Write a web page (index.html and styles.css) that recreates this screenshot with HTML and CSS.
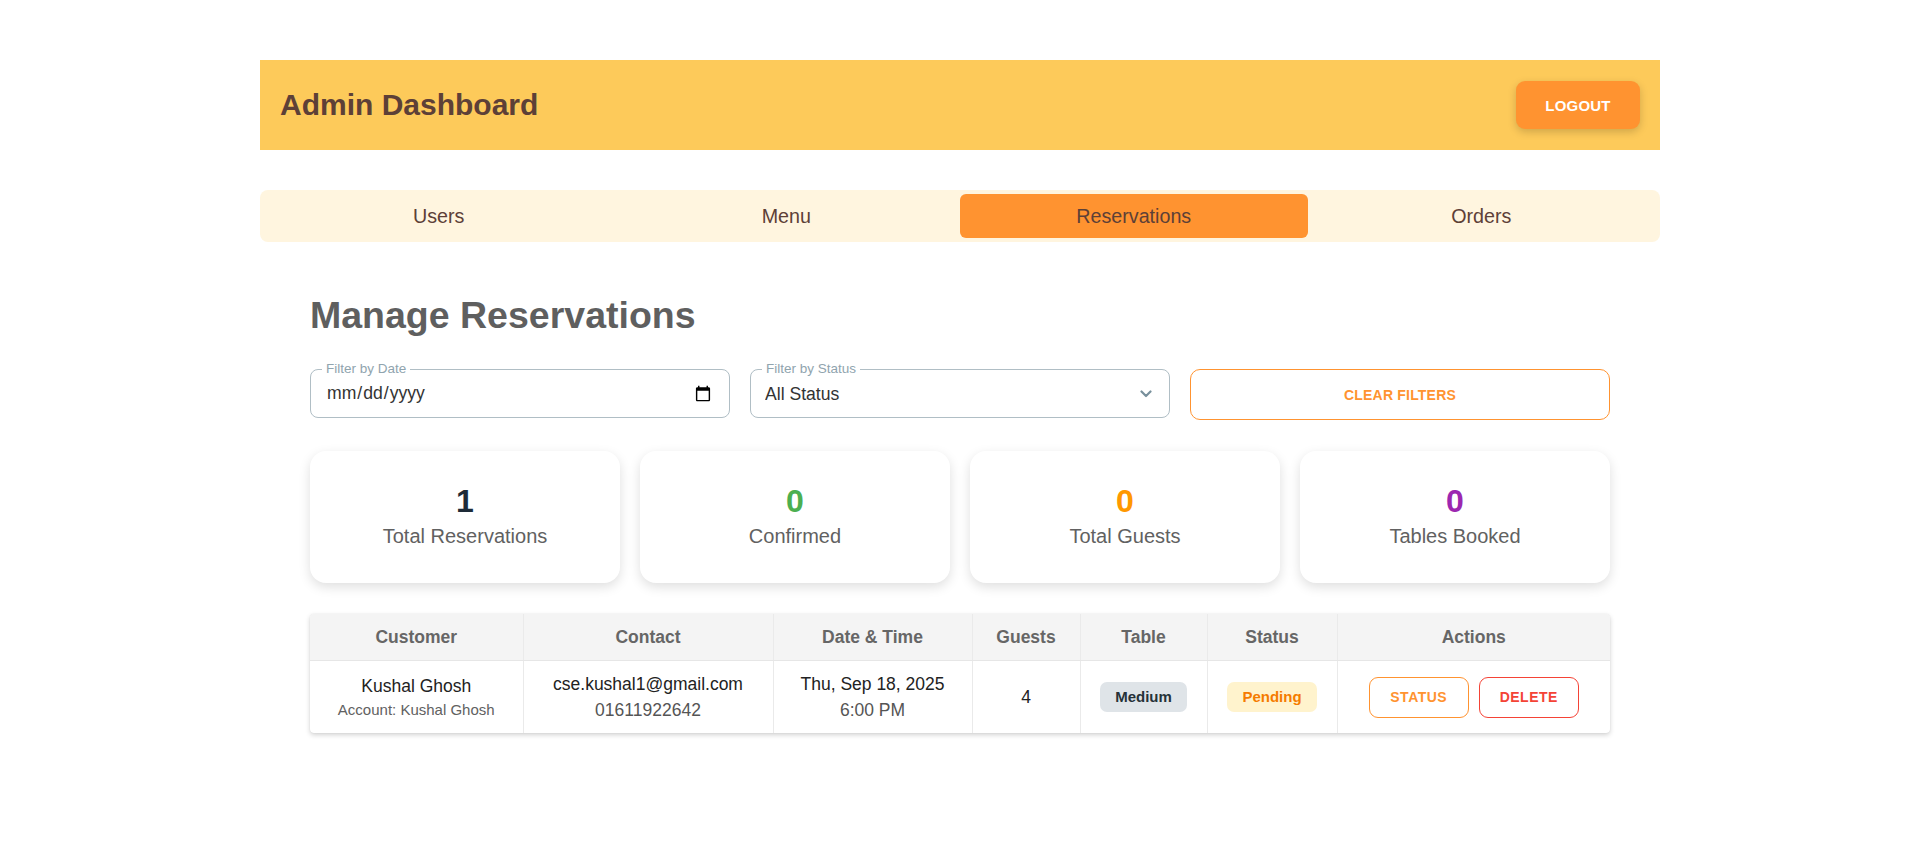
FILE: index.html
```html
<!DOCTYPE html>
<html lang="en">
<head>
<meta charset="utf-8">
<title>Admin Dashboard</title>
<link rel="stylesheet" href="styles.css">
</head>
<body>
<div class="page">
  <div class="container">
    <header class="topbar">
      <h1 class="brand">Admin Dashboard</h1>
      <button class="logout" type="button">LOGOUT</button>
    </header>

    <nav class="tabs">
      <a class="tab">Users</a>
      <a class="tab">Menu</a>
      <a class="tab active">Reservations</a>
      <a class="tab">Orders</a>
    </nav>
  </div>

  <main class="content">
    <h2 class="title">Manage Reservations</h2>

    <div class="filters">
      <label class="field">
        <span class="field-label">Filter by Date</span>
        <input class="date-input" type="date">
      </label>
      <label class="field">
        <span class="field-label">Filter by Status</span>
        <select class="select-input">
          <option>All Status</option>
          <option>Pending</option>
          <option>Confirmed</option>
          <option>Cancelled</option>
        </select>
        <svg class="chevron" width="12" height="8" viewBox="0 0 12 8" aria-hidden="true"><path d="M1.5 1.5 L6 6 L10.5 1.5" fill="none" stroke="#78909c" stroke-width="2.2" stroke-linecap="round" stroke-linejoin="round"/></svg>
      </label>
      <button class="clear-btn" type="button">CLEAR FILTERS</button>
    </div>

    <div class="stats">
      <div class="stat-card">
        <div class="stat-num num-dark">1</div>
        <div class="stat-label">Total Reservations</div>
      </div>
      <div class="stat-card">
        <div class="stat-num num-green">0</div>
        <div class="stat-label">Confirmed</div>
      </div>
      <div class="stat-card">
        <div class="stat-num num-orange">0</div>
        <div class="stat-label">Total Guests</div>
      </div>
      <div class="stat-card">
        <div class="stat-num num-purple">0</div>
        <div class="stat-label">Tables Booked</div>
      </div>
    </div>

    <div class="table-wrap">
      <table class="res-table">
        <colgroup>
          <col class="c-customer">
          <col class="c-contact">
          <col class="c-date">
          <col class="c-guests">
          <col class="c-table">
          <col class="c-status">
          <col class="c-actions">
        </colgroup>
        <thead>
          <tr>
            <th>Customer</th>
            <th>Contact</th>
            <th>Date &amp; Time</th>
            <th>Guests</th>
            <th>Table</th>
            <th>Status</th>
            <th>Actions</th>
          </tr>
        </thead>
        <tbody>
          <tr>
            <td>
              <div class="name">Kushal Ghosh</div>
              <div class="sub">Account: Kushal Ghosh</div>
            </td>
            <td>
              <div class="email">cse.kushal1@gmail.com</div>
              <div class="muted">01611922642</div>
            </td>
            <td>
              <div class="email">Thu, Sep 18, 2025</div>
              <div class="muted">6:00 PM</div>
            </td>
            <td class="guests">4</td>
            <td><span class="chip chip-table">Medium</span></td>
            <td><span class="chip chip-pending">Pending</span></td>
            <td>
              <div class="actions">
                <button class="act act-status" type="button">STATUS</button>
                <button class="act act-delete" type="button">DELETE</button>
              </div>
            </td>
          </tr>
        </tbody>
      </table>
    </div>
  </main>
</div>
</body>
</html>
```

FILE: styles.css
```css
* {
  box-sizing: border-box;
}

body {
  margin: 0;
  background: #ffffff;
  font-family: "Liberation Sans", Arial, Helvetica, sans-serif;
  color: #333333;
}

.page {
  padding-top: 60px;
  padding-bottom: 40px;
}

.container {
  width: 1400px;
  margin: 0 auto;
}

/* Header */
.topbar {
  height: 90px;
  background: #fdca5a;
  display: flex;
  align-items: center;
  justify-content: space-between;
  padding: 0 20px 0 20px;
}

.brand {
  margin: 0;
  font-size: 30px;
  font-weight: 700;
  color: #5d4037;
}

.logout {
  width: 124px;
  height: 48px;
  border: none;
  border-radius: 9px;
  background: #ff9330;
  color: #ffffff;
  font-family: inherit;
  font-size: 15px;
  font-weight: 700;
  letter-spacing: 0.2px;
  box-shadow: 0 3px 8px rgba(0, 0, 0, 0.18);
  cursor: pointer;
}

/* Tabs */
.tabs {
  margin-top: 40px;
  height: 52px;
  background: #fff5df;
  border-radius: 8px;
  padding: 4px 5px;
  display: grid;
  grid-template-columns: repeat(4, 1fr);
}

.tab {
  display: flex;
  align-items: center;
  justify-content: center;
  font-size: 19.7px;
  color: #5d4037;
  border-radius: 6px;
  cursor: pointer;
}

.tab.active {
  background: #ff9330;
}

/* Content */
.content {
  width: 1300px;
  margin: 0 auto;
}

.title {
  margin: 52px 0 0 0;
  font-size: 37.5px;
  font-weight: 700;
  color: #5f5f5f;
  line-height: 42px;
}

.filters {
  margin-top: 33px;
  display: grid;
  grid-template-columns: repeat(3, 1fr);
  gap: 20px;
  align-items: start;
}

.field {
  position: relative;
  display: flex;
  align-items: center;
  height: 49px;
  border: 1px solid #b0bec5;
  border-radius: 8px;
}

.field-label {
  position: absolute;
  top: -9px;
  left: 11px;
  padding: 0 4px;
  background: #ffffff;
  font-size: 13.5px;
  line-height: 16px;
  color: #90a4ae;
}

.date-input,
.select-input {
  width: 100%;
  height: 100%;
  border: none;
  outline: none;
  background: transparent;
  font-family: inherit;
  font-size: 17.6px;
  color: #333333;
}

.date-input {
  padding: 0 15px 0 15px;
}

.select-input {
  appearance: none;
  -webkit-appearance: none;
  padding: 0 40px 0 14px;
}

.chevron {
  position: absolute;
  right: 17px;
  top: 20px;
  pointer-events: none;
}

.clear-btn {
  height: 51px;
  border: 1px solid #ff9330;
  border-radius: 10px;
  background: #ffffff;
  color: #ff9330;
  font-family: inherit;
  font-size: 14px;
  font-weight: 700;
  letter-spacing: 0.2px;
  cursor: pointer;
}

/* Stats */
.stats {
  margin-top: 31px;
  display: grid;
  grid-template-columns: repeat(4, 1fr);
  gap: 20px;
}

.stat-card {
  height: 132px;
  padding-bottom: 4px;
  background: #ffffff;
  border-radius: 16px;
  box-shadow: 0 4px 12px rgba(0, 0, 0, 0.13);
  display: flex;
  flex-direction: column;
  align-items: center;
  justify-content: center;
}

.stat-num {
  font-size: 32px;
  font-weight: 700;
  line-height: 38px;
}

.stat-label {
  margin-top: 4px;
  font-size: 20px;
  line-height: 24px;
  color: #616161;
}

.num-dark { color: #1e2b38; }
.num-green { color: #4caf50; }
.num-orange { color: #ff9800; }
.num-purple { color: #9c27b0; }

/* Table */
.table-wrap {
  margin-top: 31px;
  border-radius: 4px;
  overflow: hidden;
  box-shadow: 0 2px 5px rgba(0, 0, 0, 0.18), 0 0 1px rgba(0, 0, 0, 0.12);
}

.res-table {
  width: 100%;
  border-collapse: collapse;
  table-layout: fixed;
  font-size: 17.5px;
}

.c-customer { width: 213px; }
.c-contact { width: 250px; }
.c-date { width: 199px; }
.c-guests { width: 108px; }
.c-table { width: 127px; }
.c-status { width: 130px; }
.c-actions { width: 273px; }

.res-table th {
  background: #f4f4f4;
  color: #666666;
  font-weight: 700;
  line-height: 26px;
  padding: 10px 8px;
  border-bottom: 1px solid #e6e6e6;
  border-right: 1px solid #eaeaea;
  text-align: center;
}

.res-table td {
  padding: 10px 8px;
  line-height: 26px;
  text-align: center;
  vertical-align: middle;
  border-right: 1px solid #eaeaea;
  color: #222222;
}

.res-table th:last-child,
.res-table td:last-child {
  border-right: none;
}

.name {
  color: #222222;
}

.sub {
  font-size: 15px;
  line-height: 22px;
  color: #616161;
}

.email {
  color: #222222;
}

.muted {
  color: #555555;
}

.guests {
  color: #333333;
}

.chip {
  display: inline-block;
  padding: 5px 15px;
  line-height: 20px;
  border-radius: 7px;
  font-size: 15px;
  font-weight: 700;
}

.chip-table {
  background: #dfe4e8;
  color: #263238;
}

.chip-pending {
  background: #fff3cd;
  color: #f57c00;
}

.actions {
  display: flex;
  justify-content: center;
  gap: 10px;
}

.act {
  width: 100px;
  height: 41px;
  border-radius: 9px;
  background: #ffffff;
  font-family: inherit;
  font-size: 14px;
  font-weight: 700;
  letter-spacing: 0.5px;
  cursor: pointer;
}

.act-status {
  border: 1px solid #ff9330;
  color: #ff9330;
}

.act-delete {
  border: 1px solid #f44336;
  color: #f44336;
}
```
